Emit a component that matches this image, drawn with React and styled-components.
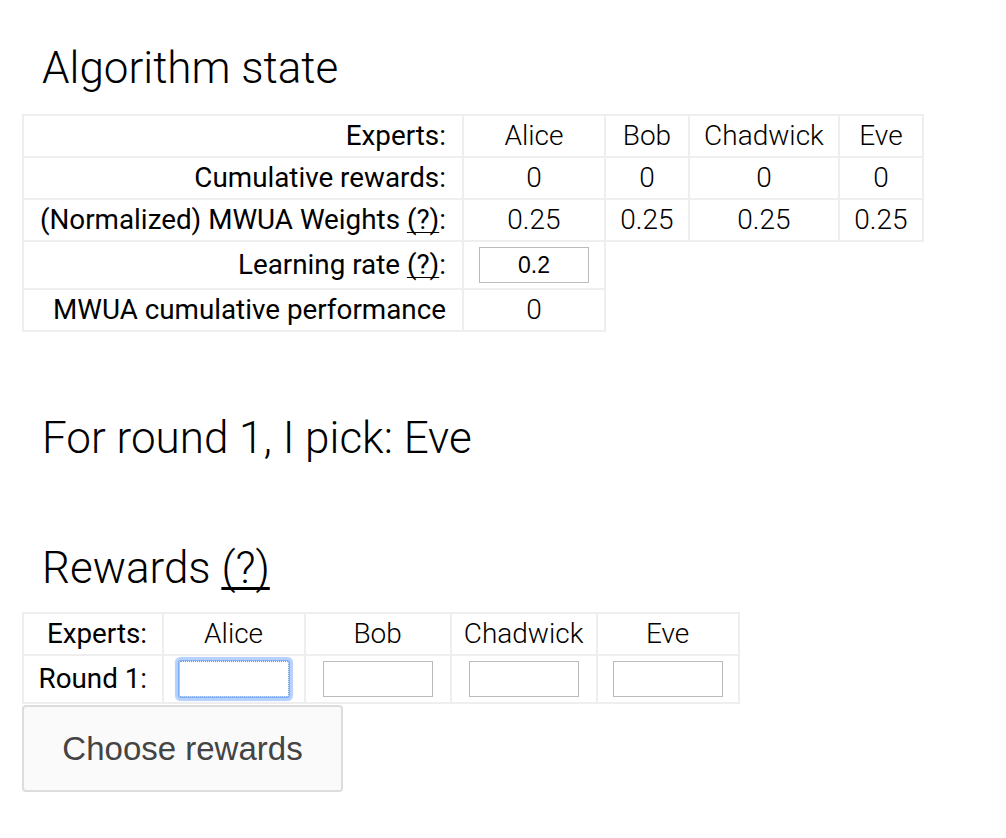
import React from "react";
import styled, { createGlobalStyle, css } from "styled-components";

const Global = createGlobalStyle`
  html, body { margin: 0; padding: 0; background: #fff; }
  body { font-family: Roboto, "Noto Sans", sans-serif; color: #000; }
`;

const Page = styled.div`
  padding: 0 0 40px 22px;
`;

const Heading = styled.h2`
  font-family: Roboto, sans-serif;
  font-weight: 300;
  font-size: 44px;
  line-height: 56px;
  margin: ${(p) => p.$top}px 0 ${(p) => p.$bottom}px 20px;
`;

const Help = styled.a`
  color: inherit;
  text-decoration: underline;
  text-decoration-thickness: ${(p) => (p.$thick ? "3px" : "1px")};
  text-underline-offset: ${(p) => (p.$thick ? "4px" : "3px")};
  text-decoration-skip-ink: none;
  cursor: help;
`;

const Table = styled.table`
  border-collapse: collapse;
`;

const Label = styled.th`
  border: 2px solid #eee;
  font-weight: 400;
  font-size: 27.8px;
  line-height: 30px;
  text-align: right;
  padding: 5px ${(p) => p.$pad ?? 16}px;
  white-space: nowrap;
`;

const Cell = styled.td`
  border: 2px solid #eee;
  font-weight: 300;
  font-size: 28px;
  line-height: 30px;
  text-align: center;
  padding: 5px 8px;
  white-space: nowrap;
  ${(p) => p.$w && css`width: ${p.$w}px; box-sizing: border-box;`}
`;

const Blank = styled.td`
  border: none;
`;

const Input = styled.input`
  display: block;
  margin: 0 auto;
  box-sizing: border-box;
  width: 110px;
  height: 36px;
  border: 1px solid #bbb;
  border-radius: 0;
  padding: 0 6px;
  font-family: "Liberation Sans", Arial, sans-serif;
  font-size: 23px;
  text-align: center;
  color: #000;
  background: #fff;
  outline: none;
  ${(p) =>
    p.$focused &&
    css`
      border: 1px dotted #5b8fe0;
      box-shadow: 0 0 0 1px #7fb0f5, 0 0 1px 4px rgba(120, 170, 250, 0.55);
      border-radius: 2px;
    `}
`;

const Button = styled.button`
  display: block;
  box-sizing: border-box;
  width: 321px;
  height: 87px;
  margin-top: 1px;
  border: 2px solid #ddd;
  border-radius: 4px;
  background: #fafafa;
  color: #444;
  font-family: "Liberation Sans", Arial, sans-serif;
  font-size: 33px;
  cursor: pointer;
`;

const experts = ["Alice", "Bob", "Chadwick", "Eve"];
const w1 = [142, 84, 150, 84];
const w2 = [142, 146, 146, 142];

export default function App() {
  return (
    <Page>
      <Global />
      <Heading $top={40} $bottom={18}>Algorithm state</Heading>
      <Table>
        <tbody>
          <tr>
            <Label>Experts:</Label>
            {experts.map((e, i) => (
              <Cell key={e} $w={w1[i]}>{e}</Cell>
            ))}
          </tr>
          <tr>
            <Label>Cumulative rewards:</Label>
            {experts.map((e) => (
              <Cell key={e}>0</Cell>
            ))}
          </tr>
          <tr>
            <Label>
              (Normalized) MWUA Weights <Help href="#">(?)</Help>:
            </Label>
            {experts.map((e) => (
              <Cell key={e}>0.25</Cell>
            ))}
          </tr>
          <tr>
            <Label>
              Learning rate <Help href="#">(?)</Help>:
            </Label>
            <Cell>
              <Input defaultValue="0.2" />
            </Cell>
            <Blank colSpan={3} />
          </tr>
          <tr>
            <Label>MWUA cumulative performance</Label>
            <Cell>0</Cell>
            <Blank colSpan={3} />
          </tr>
        </tbody>
      </Table>

      <Heading $top={78} $bottom={74}>For round 1, I pick: Eve</Heading>

      <Heading $top={0} $bottom={16}>
        Rewards <Help href="#" $thick>(?)</Help>
      </Heading>
      <Table>
        <tbody>
          <tr>
            <Label $pad={14.5}>Experts:</Label>
            {experts.map((e, i) => (
              <Cell key={e} $w={w2[i]}>{e}</Cell>
            ))}
          </tr>
          <tr>
            <Label $pad={14.5}>Round 1:</Label>
            {experts.map((e, i) => (
              <Cell key={e}>
                <Input $focused={i === 0} />
              </Cell>
            ))}
          </tr>
        </tbody>
      </Table>
      <Button>Choose rewards</Button>
    </Page>
  );
}
